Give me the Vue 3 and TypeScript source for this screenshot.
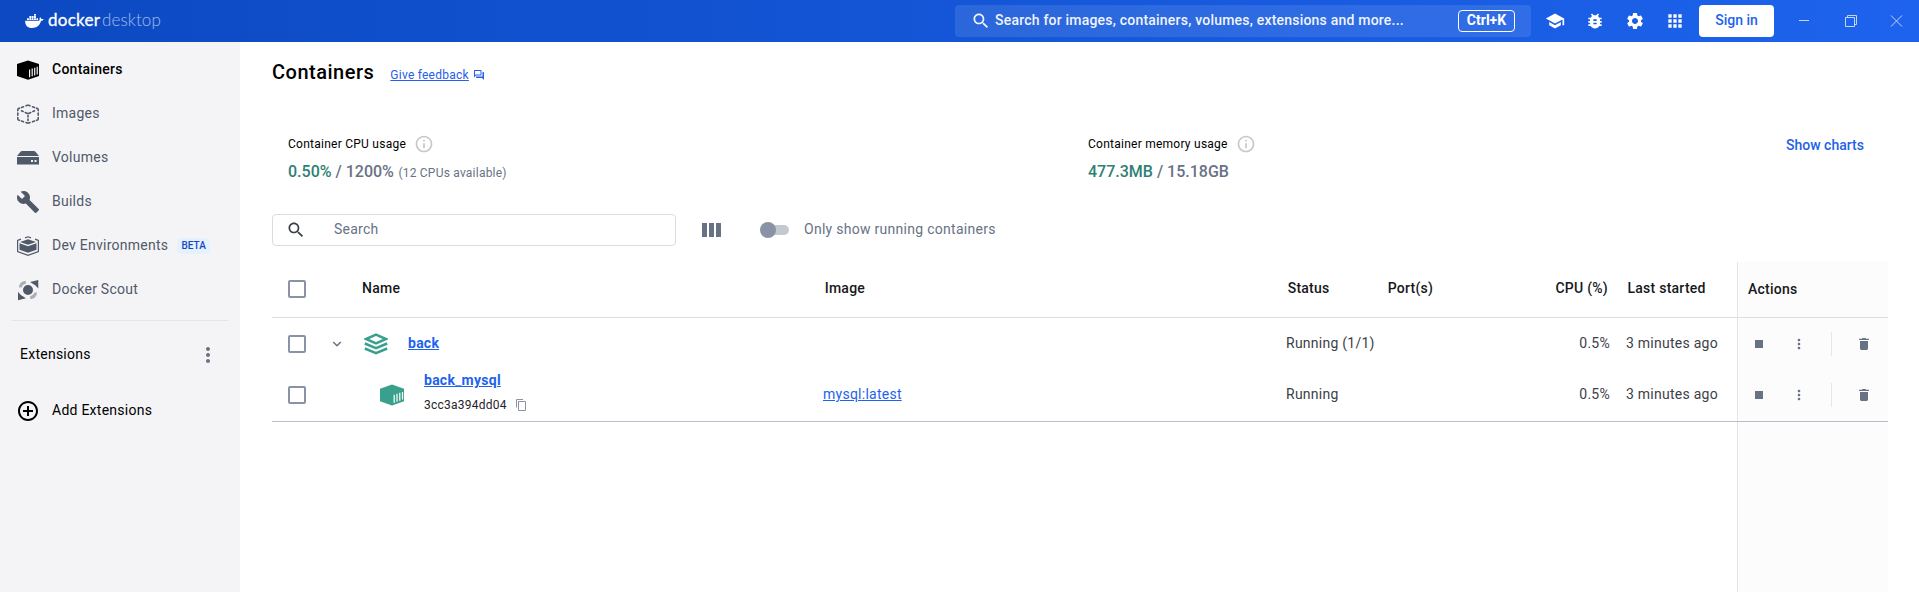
<script setup lang="ts">
interface NavItem { label: string; icon: string; active?: boolean; beta?: boolean }
const nav: NavItem[] = [
  { label: 'Containers', icon: 'container', active: true },
  { label: 'Images', icon: 'image' },
  { label: 'Volumes', icon: 'volume' },
  { label: 'Builds', icon: 'build' },
  { label: 'Dev Environments', icon: 'dev', beta: true },
  { label: 'Docker Scout', icon: 'scout' },
]
interface Row { name: string; id?: string; image?: string; status: string; cpu: string; started: string }
const rows: Row[] = [
  { name: 'back', status: 'Running (1/1)', cpu: '0.5%', started: '3 minutes ago' },
  { name: 'back_mysql', id: '3cc3a394dd04', image: 'mysql:latest', status: 'Running', cpu: '0.5%', started: '3 minutes ago' },
]
const topIcons = [
  { name: 'learn', d: 'M5 13.18v4L12 21l7-3.82v-4L12 17l-7-3.82zM12 3 1 9l11 6 9-4.91V17h2V9L12 3z' },
  { name: 'bug', d: 'M20 8h-2.81c-.45-.78-1.07-1.45-1.82-1.96L17 4.41 15.59 3l-2.17 2.17C12.96 5.06 12.49 5 12 5s-.96.06-1.41.17L8.41 3 7 4.41l1.62 1.63C7.88 6.55 7.26 7.22 6.81 8H4v2h2.09c-.05.33-.09.66-.09 1v1H4v2h2v1c0 .34.04.67.09 1H4v2h2.81c1.04 1.79 2.97 3 5.19 3s4.15-1.21 5.19-3H20v-2h-2.09c.05-.33.09-.66.09-1v-1h2v-2h-2v-1c0-.34-.04-.67-.09-1H20V8zm-6 8h-4v-2h4v2zm0-4h-4v-2h4v2z' },
  { name: 'settings', d: 'M19.14 12.94c.04-.3.06-.61.06-.94 0-.32-.02-.64-.07-.94l2.03-1.58c.18-.14.23-.41.12-.61l-1.92-3.32c-.12-.22-.37-.29-.59-.22l-2.39.96c-.5-.38-1.03-.7-1.62-.94l-.36-2.54c-.04-.24-.24-.41-.48-.41h-3.84c-.24 0-.43.17-.47.41l-.36 2.54c-.59.24-1.13.57-1.62.94l-2.39-.96c-.22-.08-.47 0-.59.22L2.74 8.87c-.12.21-.08.47.12.61l2.03 1.58c-.05.3-.09.63-.09.94s.02.64.07.94l-2.03 1.58c-.18.14-.23.41-.12.61l1.92 3.32c.12.22.37.29.59.22l2.39-.96c.5.38 1.03.7 1.62.94l.36 2.54c.05.24.24.41.48.41h3.84c.24 0 .44-.17.47-.41l.36-2.54c.59-.24 1.13-.56 1.62-.94l2.39.96c.22.08.47 0 .59-.22l1.92-3.32c.12-.22.07-.47-.12-.61l-2.01-1.58zM12 15.6c-1.98 0-3.6-1.62-3.6-3.6s1.62-3.6 3.6-3.6 3.6 1.62 3.6 3.6-1.62 3.6-3.6 3.6z' },
  { name: 'apps', d: 'M4 8h4V4H4v4zm6 12h4v-4h-4v4zm-6 0h4v-4H4v4zm0-6h4v-4H4v4zm6 0h4v-4h-4v4zm6-10v4h4V4h-4zm-6 4h4V4h-4v4zm6 6h4v-4h-4v4zm0 6h4v-4h-4v4z' },
]
const searchPath = 'M15.5 14h-.79l-.28-.27C15.41 12.59 16 11.11 16 9.5 16 5.91 13.09 3 9.5 3S3 5.91 3 9.5 5.91 16 9.5 16c1.61 0 3.09-.59 4.23-1.57l.27.28v.79l5 4.99L20.49 19l-4.99-5zm-6 0C7.01 14 5 11.99 5 9.5S7.01 5 9.5 5 14 7.01 14 9.5 11.99 14 9.5 14z'
const infoPath = 'M11 7h2v2h-2zm0 4h2v6h-2zm1-9C6.48 2 2 6.48 2 12s4.48 10 10 10 10-4.48 10-10S17.52 2 12 2zm0 18c-4.41 0-8-3.59-8-8s3.59-8 8-8 8 3.59 8 8-3.59 8-8 8z'
const morePath = 'M12 8c1.1 0 2-.9 2-2s-.9-2-2-2-2 .9-2 2 .9 2 2 2zm0 2c-1.1 0-2 .9-2 2s.9 2 2 2 2-.9 2-2-.9-2-2-2zm0 6c-1.1 0-2 .9-2 2s.9 2 2 2 2-.9 2-2-.9-2-2-2z'
</script>

<template>
  <div class="app">
    <header class="topbar">
      <div class="brand">
        <svg class="whale" viewBox="0 0 20 16">
          <path d="M0 7.2h14.1c.7 0 1.3-.3 1.5-.8-.4-.9-.3-2.1.4-3 .8.5 1.2 1.2 1.3 2 .9-.1 1.8 0 2.5.4-.5 1-1.5 1.5-2.8 1.5C15.6 12.5 12.2 15 7.4 15 2.6 15 0 12.3 0 7.2z" />
          <path d="M2 4.5h2v2H2zM4.5 4.5h2v2h-2zM7 4.5h2v2H7zM9.5 4.5h2v2h-2zM12 4.5h1.8v2H12zM4.5 2.2h2v2h-2zM7 2.2h2v2H7zM9.5 2.2h2v2h-2zM9.5 0h2v1.9h-2z" />
        </svg>
        <span class="brand-a">docker</span><span class="brand-b">desktop</span>
      </div>
      <div class="global-search">
        <svg class="i20" viewBox="0 0 24 24"><path :d="searchPath" /></svg>
        <span class="gs-text">Search for images, containers, volumes, extensions and more...</span>
        <kbd>Ctrl+K</kbd>
      </div>
      <div class="top-icons">
        <svg v-for="i in topIcons" :key="i.name" class="i20" viewBox="0 0 24 24"><path :d="i.d" /></svg>
      </div>
      <button class="signin">Sign in</button>
      <div class="win">
        <svg viewBox="0 0 12 12"><path d="M1 5.5h10" /></svg>
        <svg viewBox="0 0 12 12"><path d="M1.5 2.5h9v9h-9zM3.5 2.5v-2h9v9h-2" /></svg>
        <svg viewBox="0 0 12 12"><path d="M1 .5l11 11M12 .5l-11 11" /></svg>
      </div>
    </header>

    <div class="body">
      <aside class="sidebar">
        <nav>
          <div v-for="n in nav" :key="n.label" class="nav-item" :class="{ active: n.active }">
            <svg class="nav-icon" viewBox="0 0 24 24">
              <template v-if="n.icon === 'container'">
                <path d="M12 2.5 23 6v12l-11 3.8L1 18V6z" />
                <path class="slat" d="M13.6 11.500v7.8M16.2 10.6v7.7M18.7 9.7v7.7M21.2 8.8v7.7" />
              </template>
              <template v-else-if="n.icon === 'image'">
                <path class="dash" d="M10 3.8l1.4-.5q.6-.2 1.2 0l1.4.5M16.5 4.8l2 .7M20.5 6.2l1 .4q.7.3.7 1v1.2M22.2 11v2.2M22.2 15.5v1.4q0 .7-.7 1l-1 .4M18.5 19l-2 .7M14 20.5l-1.4.5q-.6.2-1.2 0l-1.4-.5M7.5 19.7l-2-.7M3.5 18.3l-1-.4q-.7-.3-.7-1v-1.4M1.8 13.2V11M1.8 8.8V7.6q0-.7.7-1l1-.4M5.5 5.500l2-.7M5.500 8.800l1.600.7M9.300 10.500l2.100.9q.6.3 1.200 0l2.100-.9M16.900 9.500l1.600-.7M12 13.500v1.500M12 17v1.500" />
              </template>
              <template v-else-if="n.icon === 'volume'">
                <path d="M6.5 5h11c1 0 1.5.3 2.2 1L23 10H1l3.300-4c.7-.7 1.200-1 2.200-1zM1 11h22v7.500H1z" />
                <path class="hole" d="M15 14h2v2h-2zM18.500 14h2v2h-2z" />
              </template>
              <path v-else-if="n.icon === 'build'" d="m22.700 19-9.100-9.100c.9-2.300.4-5-1.500-6.900-2-2-5-2.400-7.400-1.300L9 6 6 9 1.600 4.700C.4 7.100.9 10.100 2.900 12.100c1.900 1.900 4.600 2.400 6.900 1.500l9.100 9.100c.4.4 1 .4 1.400 0l2.300-2.300c.5-.4.5-1.100.1-1.400z" />
              <template v-else-if="n.icon === 'dev'">
                <path d="M12 5.200 20 8l-8 2.800L4 8zM3.500 9.200 12 12.200l8.500-3v6.600L12 18.800l-8.500-3z" />
                <path class="frame" d="M9 3.900l3-1.100 3 1.100M5 5.100l-3.400 1.300v11.200l10.400 3.700 10.400-3.700V6.400L19 5.100" />
              </template>
              <template v-else>
                <circle cx="12" cy="12" r="5" />
                <path d="M22.300 2v8.500L19.500 7.500 14 4zM2 22.300v-8.500L4.800 17l5.200 3.300z" />
                <path class="faint" d="M3 9.500C3.300 5.500 5.500 3 9.800 3v2.800C7.500 6.500 6.300 7.500 5.500 9.500zM21 14.500c-.3 4-2.500 6.500-6.800 6.500v-2.800c2.300-.7 3.500-1.700 4.300-3.700z" />
              </template>
            </svg>
            <span class="lift">{{ n.label }}</span>
            <span v-if="n.beta" class="beta">BETA</span>
          </div>
        </nav>
        <div class="side-rule"></div>
        <div class="ext-head">
          <span class="lift">Extensions</span>
          <svg class="more" viewBox="0 0 24 24"><path :d="morePath" /></svg>
        </div>
        <div class="nav-item add">
          <svg class="nav-icon" viewBox="0 0 24 24"><path d="M13 7h-2v4H7v2h4v4h2v-4h4v-2h-4V7zm-1-5C6.48 2 2 6.48 2 12s4.48 10 10 10 10-4.48 10-10S17.52 2 12 2zm0 18c-4.41 0-8-3.59-8-8s3.59-8 8-8 8 3.59 8 8-3.59 8-8 8z" /></svg>
          <span class="lift">Add Extensions</span>
        </div>
      </aside>

      <main class="main">
        <div class="title-row">
          <h1>Containers</h1>
          <a class="feedback">Give feedback</a>
          <svg class="forum" viewBox="0 0 24 24"><path d="M15 4v7H5.17L4 12.17V4h11m1-2H3c-.55 0-1 .45-1 1v14l4-4h10c.55 0 1-.45 1-1V3c0-.55-.45-1-1-1zm5 4h-2v9H6v2c0 .55.45 1 1 1h11l4 4V7c0-.55-.45-1-1-1z" /></svg>
        </div>

        <section class="stats">
          <div class="stat">
            <div class="stat-label"><span>Container CPU usage</span><svg viewBox="0 0 24 24"><path :d="infoPath" /></svg></div>
            <div class="stat-value"><span class="green">0.50%</span><span class="gray"> / 1200%</span><small>(12 CPUs available)</small></div>
          </div>
          <div class="stat">
            <div class="stat-label"><span>Container memory usage</span><svg viewBox="0 0 24 24"><path :d="infoPath" /></svg></div>
            <div class="stat-value"><span class="green">477.3MB</span><span class="gray"> / 15.18GB</span></div>
          </div>
          <a class="charts">Show charts</a>
        </section>

        <div class="filters">
          <div class="search">
            <svg class="i20" viewBox="0 0 24 24"><path :d="searchPath" /></svg>
            <span class="lift">Search</span>
          </div>
          <div class="cols"><i></i><i></i><i></i></div>
          <div class="toggle"><i></i></div>
          <span class="toggle-label lift">Only show running containers</span>
        </div>

        <div class="table">
          <div class="tr head">
            <div class="cell-check"><i class="check"></i></div>
            <div class="h-name lift">Name</div>
            <div class="h-pad lift">Image</div>
            <div class="h-pad lift">Status</div>
            <div class="h-pad lift">Port(s)</div>
            <div class="cpu h-cpu lift">CPU (%)</div>
            <div class="h-started lift">Last started</div>
            <div class="actions">Actions</div>
          </div>
          <div v-for="r in rows" :key="r.name" class="tr row" :class="{ child: r.id }">
            <div class="cell-check"><i class="check"></i></div>
            <div class="name">
              <template v-if="!r.id">
                <svg class="chev" viewBox="0 0 10 6"><path d="M1.2 1 5 4.8 8.8 1" /></svg>
                <svg class="stack" viewBox="0 0 24 22">
                  <path d="M12 1.7 22 6l-10 4.3L2 6z" />
                  <path d="M.8 10.5 12 15.2l11.2-4.7M.8 15.500 12 20.200l11.200-4.700" />
                </svg>
              </template>
              <svg v-else class="box" viewBox="0 0 24 22">
                <path d="M12 .5 24 4.7v12.5L12 21.5 0 17.2V4.7z" />
                <path class="slat" d="M14.200 10.800v7.900M17 9.800v7.900M19.800 8.800v7.900M22.500 7.900v7.700" />
              </svg>
              <div class="name-text">
                <a class="strong">{{ r.name }}</a>
                <div v-if="r.id" class="cid"><span>{{ r.id }}</span>
                  <svg viewBox="0 0 10 12"><path d="M.5 8.5v-8H7" /><path d="M2.5 2.5h7v9h-7z" /></svg>
                </div>
              </div>
            </div>
            <div class="lift"><a v-if="r.image" class="link">{{ r.image }}</a></div>
            <div class="dim lift">{{ r.status }}</div>
            <div></div>
            <div class="cpu dim lift">{{ r.cpu }}</div>
            <div class="dim started lift">{{ r.started }}</div>
            <div class="actions">
              <i class="stop"></i>
              <svg class="kebab" viewBox="0 0 24 24"><path :d="morePath" /></svg>
              <i class="vr"></i>
              <svg class="trash" viewBox="0 0 10 12"><path d="M1 3h8v7.6c0 .8-.6 1.4-1.4 1.4H2.4C1.6 12 1 11.4 1 10.6zM0 .7h2.8L3.5 0h3l.7.7H10V2H0z" /></svg>
            </div>
          </div>
          <div class="tr filler"><div class="actions"></div></div>
        </div>
      </main>
    </div>
  </div>
</template>

<style>
body { background: #fff; overflow: hidden; }
</style>

<style scoped>
.app { width: 100%; height: 592px; display: flex; flex-direction: column; font-family: Roboto, "Liberation Sans", sans-serif; font-size: 14px; letter-spacing: 0.25px; color: #000; overflow: hidden; }
.app * { box-sizing: border-box; }
svg { display: block; fill: currentColor; flex: none; }
.i20 { width: 20px; height: 20px; }
.lift { padding-bottom: 2px; }

.topbar { height: 42px; flex: none; display: flex; align-items: center; background: linear-gradient(90deg, #0c49c2, #1d63ed); color: #fff; padding-left: 25px; }
.brand { display: flex; align-items: center; width: 930px; }
.whale { width: 19px; height: 15px; margin-right: 4px; }
.brand-a, .brand-b { font-family: Lato, sans-serif; font-size: 17px; line-height: 20px; padding-bottom: 2px; }
.brand-a { font-weight: 400; width: 54px; letter-spacing: 0.25px; -webkit-text-stroke: 0.3px #fff; }
.brand-b { opacity: 0.6; font-weight: 300; letter-spacing: 0.1px; }
.global-search { width: 576px; height: 32px; border-radius: 4px; background: rgba(255, 255, 255, 0.1); display: flex; align-items: center; padding: 0 16px; color: #f0f4fe; }
.gs-text { margin-left: 4px; font-weight: 500; flex: 1; padding-bottom: 2px; letter-spacing: 0.21px; }
kbd { font: 700 14px/19px Roboto, sans-serif; letter-spacing: 0; color: #fff; border: 1px solid #fff; border-radius: 4px; width: 57px; height: 22px; text-align: center; }
.top-icons { display: flex; gap: 20px; margin-left: 14px; }
.signin { margin-left: 14px; width: 75px; height: 32px; border: 0; border-radius: 4px; background: #fff; color: #1d63ed; font: 500 14px Roboto, sans-serif; padding: 0 0 2px; }
.win { display: flex; gap: 34px; margin-left: 24px; }
.win svg { width: 12px; height: 12px; fill: none; stroke: #c3d5fb; stroke-width: 1; overflow: visible; }

.body { display: flex; flex: 1; }
.sidebar { width: 240px; background: #f4f4f6; padding: 6px 12px 0; flex: none; }
.nav-item { height: 44px; display: flex; align-items: center; padding-left: 4px; color: #505968; }
.nav-item.active { color: #000; font-weight: 500; }
.nav-icon { width: 24px; height: 24px; margin-right: 12px; }
.slat { fill: none; stroke: #f4f4f6; stroke-width: 1.2; }
.dash, .frame { fill: none; stroke: currentColor; stroke-width: 1.6; }
.dash { stroke-linecap: round; }
.frame { stroke-width: 1.2; }
.hole { fill: #f4f4f6; }
.faint { opacity: 0.45; }
.beta { margin-left: 9px; width: 33px; height: 16px; border-radius: 4px; background: #e5f2fc; color: #1448c4; font-size: 10px; font-weight: 500; line-height: 16px; text-align: center; letter-spacing: 0; }
.side-rule { height: 1px; background: #e4e4e8; margin-top: 8px; }
.ext-head { display: flex; justify-content: space-between; align-items: center; height: 68px; padding: 0 8px; }
.more { width: 24px; height: 24px; color: #677285; }
.add { color: #000; }

.main { flex: 1; padding-left: 32px; }
.title-row { display: flex; height: 60px; align-items: center; }
h1 { margin: 0 16px 0 0; font-size: 20px; font-weight: 500; line-height: 24px; letter-spacing: 0.5px; }
.feedback { color: #2560e8; font-size: 12px; text-decoration: underline; margin-top: 5px; }
.forum { width: 12px; height: 12px; color: #2560e8; margin: 6px 0 0 4px; }
.stats { display: flex; height: 112px; padding: 32px 0 0 16px; }
.stat { width: 800px; }
.stat-label { display: flex; align-items: center; height: 20px; font-size: 12px; }
.stat-label svg { width: 20px; height: 20px; color: #c8c8c8; margin-left: 8px; }
.stat-value { margin-top: 8px; font-size: 16px; font-weight: 500; line-height: 20px; white-space: pre; letter-spacing: 0; }
.green { color: #2e7f74; }
.gray { color: #677285; }
small { font-size: 12px; font-weight: 400; color: #677285; margin-left: 4.5px; letter-spacing: 0.22px; }
.charts { color: #2560e8; font-weight: 500; margin-left: -102px; line-height: 22px; letter-spacing: 0; }
.filters { display: flex; align-items: center; height: 32px; color: #677285; }
.search { width: 404px; height: 32px; border: 1px solid #dcdcde; border-radius: 4px; display: flex; align-items: center; padding-left: 13px; }
.search svg { color: #393f49; margin-right: 28px; }
.cols { display: flex; gap: 2px; margin-left: 26px; }
.cols i { width: 5px; height: 14px; background: #677285; }
.toggle { margin-left: 43px; width: 25px; height: 10px; border-radius: 5px; background: #c4c8d1; position: relative; }
.toggle i { position: absolute; left: -4px; top: -3px; width: 16px; height: 16px; border-radius: 50%; background: #8993a5; }
.toggle-label { margin-left: 15px; letter-spacing: 0.28px; }

.table { width: 1616px; margin-top: 16px; }
.tr { display: grid; grid-template-columns: 60px 491px 463px 100px 100px 124px 127px 151px; align-items: center; border-bottom: 1px solid #dcdee0; }
.head { height: 56px; font-weight: 500; color: #16181c; }
.head .lift { padding-bottom: 4px; }
.h-name { padding-left: 30px; }
.h-pad { padding-left: 1.7px; }
.h-cpu { padding-right: 2px; }
.h-started { padding-left: 17.5px; }
.started { padding-left: 16px; }
.row { height: 52px; border-bottom: 0; }
.row.child { border-bottom: 1px solid #b9bdca; }
.filler { height: 170px; border: 0; }
.filler .actions { grid-column: 8; }
.cell-check { padding-left: 16px; }
.head .cell-check, .child .cell-check { padding-bottom: 1px; }
.check { display: block; width: 18px; height: 18px; border: 2px solid #8993a5; border-radius: 2px; }
.cpu { text-align: right; }
.actions { align-self: stretch; display: flex; align-items: center; background: #fcfcfd; border-left: 1px solid #e3e4e6; padding-left: 10px; }
.head .actions, .child .actions { padding-bottom: 1px; }
.child .lift { padding-bottom: 3px; }
.name { display: flex; align-items: center; }
.chev { width: 10px; height: 6px; fill: none; stroke: #677285; stroke-width: 1.5; margin-right: 22px; }
.stack { width: 24px; height: 22px; fill: none; stroke: #3aa08e; stroke-width: 2.5; margin-right: 20px; }
.box { width: 24px; height: 22px; fill: #3aa08e; margin: 0 20px 1px 48px; }
.box .slat { stroke: #fff; fill: none; }
.name-text { line-height: 20px; padding-bottom: 2px; }
.child .name-text { padding-bottom: 6px; }
.strong { color: #1d63ed; font-weight: 700; text-decoration: underline; }
.link { color: #1d63ed; text-decoration: underline; }
.cid { display: flex; align-items: center; font-size: 12px; color: #1f2329; margin-top: 5px; }
.cid svg { width: 10px; height: 12px; fill: none; stroke: #8993a5; margin-left: 9px; }
.dim { color: #3c4047; }
.stop { width: 8px; height: 8px; background: #677285; margin-left: 7px; }
.kebab { width: 16px; height: 16px; color: #677285; margin-left: 28px; }
.vr { width: 1px; height: 24px; background: #e6e6ea; margin-left: 24px; }
.trash { width: 10px; height: 12px; color: #677285; margin-left: 27px; }
</style>
